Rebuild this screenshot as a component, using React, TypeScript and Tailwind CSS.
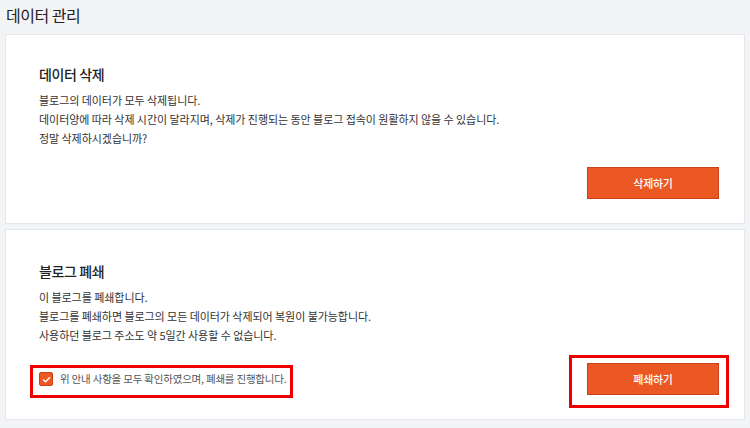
import { useState } from 'react';

const ko = { fontFamily: '"Noto Sans CJK KR", "Noto Sans", sans-serif' };

function ActionButton({ label }: { label: string }) {
  return (
    <button className="w-[132px] h-[32px] bg-[#ec5823] border border-[#c9421a] text-white text-[11px] font-medium tracking-[-0.3px]">
      {label}
    </button>
  );
}

export default function App() {
  const [agreed, setAgreed] = useState(true);

  return (
    <div className="w-[750px] h-[428px] bg-[#f3f4f6] px-[5px] text-[#222] overflow-hidden" style={ko}>
      <h1 className="h-[30px] leading-[30px] pl-[1px] text-[16px] tracking-[-0.5px] mb-[4px]">데이터 관리</h1>

      <section className="bg-white border border-[#e4e7ec] pl-[33px] pr-[25px] pt-[27px] pb-[24px]">
        <h2 className="text-[14px] leading-[24px] font-medium tracking-[-0.4px]">데이터 삭제</h2>
        <div className="mt-[5px] text-[11px] leading-[19px] text-[#333] tracking-[-0.05px]">
          <p>블로그의 데이터가 모두 삭제됩니다.</p>
          <p>데이터양에 따라 삭제 시간이 달라지며, 삭제가 진행되는 동안 블로그 접속이 원활하지 않을 수 있습니다.</p>
          <p>정말 삭제하시겠습니까?</p>
        </div>
        <div className="mt-[19px] flex justify-end">
          <ActionButton label="삭제하기" />
        </div>
      </section>

      <section className="mt-[5px] bg-white border border-[#e4e7ec] pl-[33px] pr-[25px] pt-[29px] pb-[24px]">
        <h2 className="text-[14px] leading-[24px] font-medium tracking-[-0.4px]">블로그 폐쇄</h2>
        <div className="mt-[5px] text-[11px] leading-[19px] text-[#333] tracking-[-0.05px]">
          <p>이 블로그를 폐쇄합니다.</p>
          <p>블로그를 폐쇄하면 블로그의 모든 데이터가 삭제되어 복원이 불가능합니다.</p>
          <p>사용하던 블로그 주소도 약 5일간 사용할 수 없습니다.</p>
        </div>
        <div className="relative mt-[18px] flex items-center justify-between">
          <label className="flex items-center gap-[7px] cursor-pointer" onClick={() => setAgreed(!agreed)}>
            <span className="w-[14px] h-[14px] rounded-[2px] bg-[#ec5823] border border-[#c9421a] flex items-center justify-center">
              {agreed && (
                <svg width="9" height="7" viewBox="0 0 9 7" fill="none">
                  <path d="M1 3.4 L3.5 5.8 L8 1.2" stroke="white" strokeWidth="1.4" />
                </svg>
              )}
            </span>
            <span className="text-[10.5px] text-[#555] tracking-[-0.2px]">위 안내 사항을 모두 확인하였으며, 폐쇄를 진행합니다.</span>
          </label>
          <ActionButton label="폐쇄하기" />

          <div className="absolute left-[-9px] top-[2px] w-[263px] h-[33px] border-[3px] border-[#ee0000] pointer-events-none" />
          <div className="absolute left-[530px] top-[-8px] w-[160px] h-[53px] border-[3px] border-[#ee0000] pointer-events-none" />
        </div>
      </section>
    </div>
  );
}
